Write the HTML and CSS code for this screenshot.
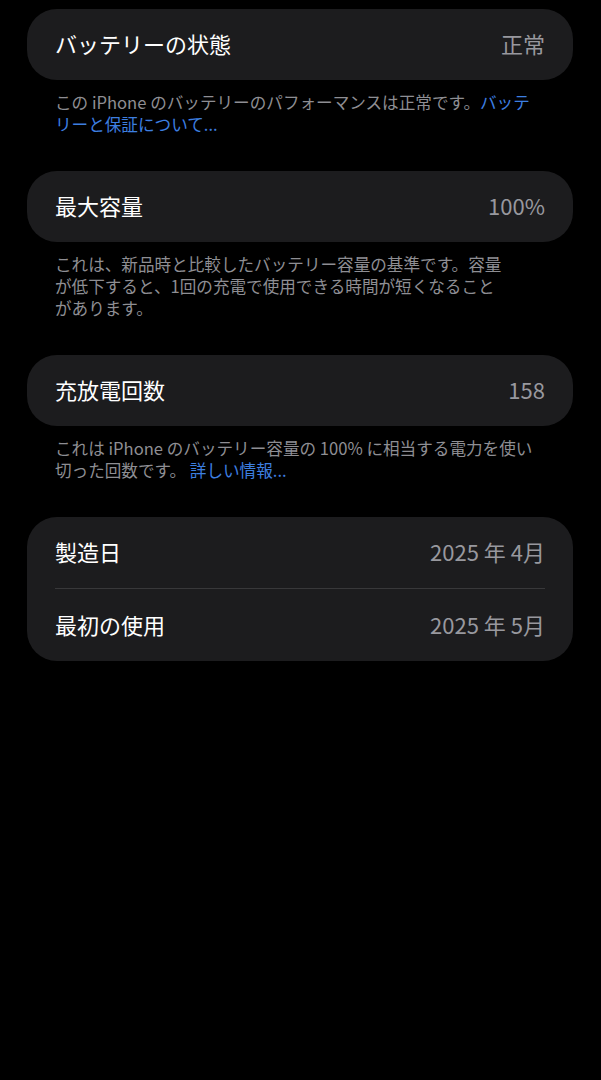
FILE: index.html
```html
<!doctype html>
<html lang="ja">
  <head>
    <meta charset="UTF-8" />
    <meta name="viewport" content="width=device-width, initial-scale=1.0" />
    <title>バッテリーの状態</title>
    <link rel="stylesheet" href="styles.css">
  </head>
  <body>
    <div class="screen">
      <section class="group">
        <div class="card">
          <div class="row">
            <span class="label">バッテリーの状態</span>
            <span class="value">正常</span>
          </div>
        </div>
        <p class="note">
          この iPhone のバッテリーのパフォーマンスは正常です。<a href="#">バッテ<br>リーと保証について...</a>
        </p>
      </section>

      <section class="group">
        <div class="card">
          <div class="row">
            <span class="label">最大容量</span>
            <span class="value">100%</span>
          </div>
        </div>
        <p class="note">
          これは、新品時と比較したバッテリー容量の基準です。容量<br>が低下すると、1回の充電で使用できる時間が短くなること<br>があります。
        </p>
      </section>

      <section class="group">
        <div class="card">
          <div class="row">
            <span class="label">充放電回数</span>
            <span class="value">158</span>
          </div>
        </div>
        <p class="note">
          これは iPhone のバッテリー容量の 100% に相当する電力を使い<br>切った回数です。 <a href="#">詳しい情報...</a>
        </p>
      </section>

      <section class="group">
        <div class="card">
          <div class="row">
            <span class="label">製造日</span>
            <span class="value">2025 年 4月</span>
          </div>
          <div class="row">
            <span class="label">最初の使用</span>
            <span class="value">2025 年 5月</span>
          </div>
        </div>
      </section>
    </div>
  </body>
</html>
```

FILE: styles.css
```css
html,
body {
  margin: 0;
  background: #000;
}

body {
  font-family: "Noto Sans CJK JP", "Noto Sans", sans-serif;
  color: #fff;
}

.screen {
  padding: 9px 28px 0 27px;
}

.group {
  margin-bottom: 36px;
}

.card {
  background: #1c1c1e;
  border-radius: 30px;
  padding: 0 28px;
}

.row {
  display: flex;
  justify-content: space-between;
  align-items: center;
  height: 71px;
  padding-bottom: 3px;
  box-sizing: border-box;
  font-size: 22px;
}

.row + .row {
  border-top: 1px solid #38383a;
  height: 73px;
}

.label {
  color: #fff;
}

.value {
  color: #98989e;
}

.note {
  margin: 11px 0 0;
  padding: 0 28px;
  font-size: 16.6px;
  line-height: 22px;
  color: #8e8e93;
}

.note a {
  color: #3d7fe0;
  text-decoration: none;
}
```
